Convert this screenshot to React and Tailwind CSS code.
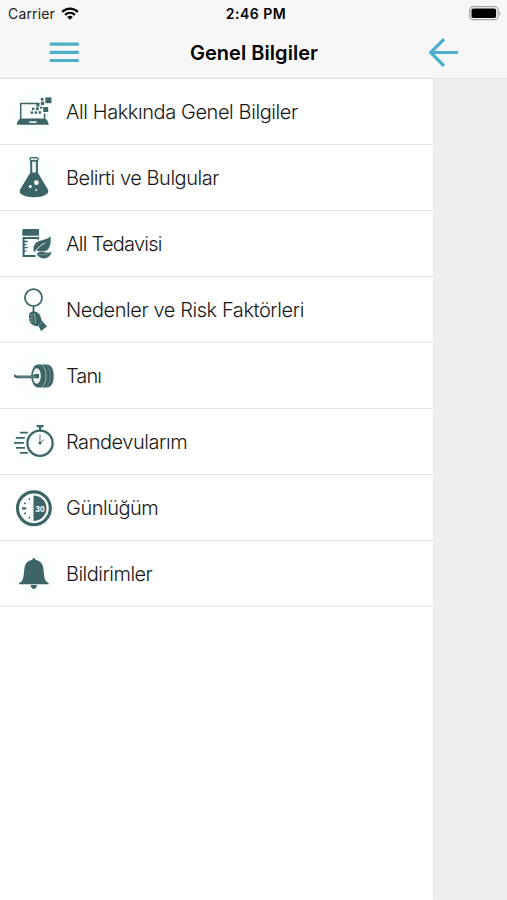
import React from "react";

const INK = "#3d6466";

function Laptop() {
  return (
    <>
      <path d="M39.5 24.4H20.7V40.2H44.600V34.500" fill="none" stroke={INK} strokeWidth="1.500" />
      <path d="M19 40.300h27.500l2 3.600v1.800H17v-1.800z" fill={INK} />
      <path d="M28.500 42.200h9l-1.500 1.900h-6z" fill="#dfeceb" />
      <g fill={INK}>
        <rect x="45.400" y="18.400" width="6" height="5.800" />
        <rect x="43.200" y="28" width="5" height="5" />
        <rect x="40.800" y="19" width="2.700" height="2.600" />
        <rect x="40.800" y="22.700" width="3.400" height="3.300" />
        <rect x="36.400" y="24.600" width="3" height="3" />
        <rect x="32" y="28.800" width="2.400" height="2.400" />
        <rect x="36" y="28.400" width="2.800" height="2.800" />
        <rect x="40.200" y="27.600" width="2.200" height="2.200" />
        <rect x="30.600" y="32.400" width="2.400" height="2.400" />
        <rect x="34.600" y="32.400" width="2.400" height="2.400" />
        <rect x="38.600" y="32.200" width="2.400" height="2.400" />
      </g>
    </>
  );
}

function Flask() {
  return (
    <>
      <path d="M30.200 15.500v12.300L20.100 44.500c-2.200 4.600 4.700 7.700 13.900 7.700s16.100-3.100 13.900-7.700L37.900 27.800V15.500z" fill={INK} />
      <path d="M32.200 16.500h3.700v11H32.200z" fill="#f1f8f8" />
      <rect x="29.900" y="12.700" width="8.300" height="3" rx="1.500" fill="#dfeaea" stroke={INK} strokeWidth="1.300" />
      <circle cx="36.400" cy="37.700" r="2.400" fill="#fff" />
      <circle cx="30.300" cy="41.500" r="1.500" fill="#fff" />
      <circle cx="36.200" cy="45" r="1" fill="#dfeceb" />
    </>
  );
}

function Medicine() {
  return (
    <>
      <rect x="22.300" y="18" width="16.700" height="6.700" rx="1" fill={INK} />
      <path d="M38 28.500V27H23.600V44.900H35.500" fill="none" stroke={INK} strokeWidth="2" />
      <path d="M24 30.500h3.700M24 33.600h2.600M24 36.700h3.700M24 39.800h2.600" stroke={INK} strokeWidth="1.300" />
      <path d="M50.600 25.400c.5 7.500-.6 14.200-7.400 15.200-2.800.4-5.100-.2-7-1.300l-2 2c-2-5.400.6-10 5-11.400 4.300-1.200 8-1.700 11.400-4.500z" fill={INK} />
      <path d="M34.300 42.800c2.300-5.500 6.200-8.600 10.700-11" fill="none" stroke="#e4efee" strokeWidth="1" />
      <path d="M36.300 43c2.500-3.200 6.400-2.900 8.400-2.100 2.300.8 4.400 1 7.200-.3-.8 3.900-3.700 7-7.900 7.100-3.300.1-5.400-1.700-7.700-4.700z" fill={INK} stroke="#f8fdfc" strokeWidth=".5" />
      <path d="M38.500 43.300c3 .8 5.800.8 9-.2" fill="none" stroke="#9db7b7" strokeWidth=".6" />
    </>
  );
}

function Magnifier() {
  return (
    <>
      <circle cx="33.500" cy="20.700" r="8.500" fill="none" stroke={INK} strokeWidth="1.800" />
      <path d="M33.500 29.500v6" stroke={INK} strokeWidth="1.800" />
      <path d="M29.600 36.300c1-1.300 2.700-2 4.300-1.700 2.600.1 5 1.500 6.200 3.600.7 1.800.9 3.700 1.700 5.400l5.200 5.900-6 4.500-2.500-5c-2.500.5-4.800-.2-6.800-1.700-1.900-1.600-2.400-3.100-2.400-5.300-.5-2-.4-4 .3-5.700z" fill={INK} />
      <path d="M34.600 36.500c-.6 3.500 1.800 5.500.6 10M30.200 38.200h2.700M29.900 41.300h2.900M30.500 44.200h2.500" fill="none" stroke="#b9cccc" strokeWidth=".7" />
      <path d="M38 49l4.500-4" stroke="#8ba9a9" strokeWidth=".6" />
    </>
  );
}

function Wheel() {
  return (
    <>
      <path d="M38.500 21.600H47c4.300 0 6.700 5 6.700 11.400S51.300 44.500 47 44.500h-8.500z" fill={INK} />
      <ellipse cx="38" cy="33" rx="6.800" ry="11.400" fill={INK} />
      <ellipse cx="36.800" cy="33" rx="4" ry="7.800" fill="#eff7f6" />
      <path d="M41.500 22c3.300 2 4.600 6.200 4.600 11s-1.300 9-4.600 11" fill="none" stroke="#b6caca" strokeWidth=".8" />
      <path d="M46.800 22.400c2.400 2.500 3.500 6.500 3.500 10.600s-1.100 8-3.500 10.500" fill="none" stroke="#7f9f9f" strokeWidth=".6" />
      <path d="M14 31.300l2.500 1.300H33l1.500-1.600h4.500v4.300H17.500L14 34z" fill={INK} />
      <path d="M18 33.900h18" stroke="#8dabab" strokeWidth=".6" />
    </>
  );
}

function Stopwatch() {
  return (
    <>
      <circle cx="40" cy="34.200" r="12.600" fill="none" stroke={INK} strokeWidth="2.300" />
      <path d="M36.700 17.100h6.800M40.100 17v4.500" stroke={INK} strokeWidth="2.300" />
      <path d="M20 23.600h7.800M15.800 28.900h9M14 33.900h9.800M16 38.900h9M20 43.800h7.800" stroke={INK} strokeWidth="1.800" />
      <path d="M40 25.500v8.700l4-3.500" fill="none" stroke={INK} strokeWidth=".9" />
      <circle cx="40" cy="34.200" r="1.400" fill={INK} />
    </>
  );
}

function Dial() {
  return (
    <>
      <circle cx="33.900" cy="33.300" r="16.400" fill="#fbffff" stroke={INK} strokeWidth="3.100" />
      <path d="M33.500 20.500a13 12.800 0 0 1 0 25.600z" fill={INK} />
      <path d="M28.800 23.200l1 1.900M24 27.900l1.900 1M24 38.900l1.900-1M28.800 43.500l1-1.900" stroke={INK} strokeWidth="1.300" />
      <path d="M22 33.400h4.200" stroke={INK} strokeWidth="2.200" />
      <text x="40" y="36.500" textAnchor="middle" fill="#fff" className="font-['Liberation_Sans',sans-serif] text-[8.500px] font-bold">30</text>
    </>
  );
}

function Bell() {
  return (
    <>
      <path d="M32.400 18.700a1.500 1.800 0 0 1 3 0c4.500.9 7.300 3.700 7.900 8.200.8 5.300.7 10.400 2.600 13l2.800 2.400v1H19v-1l2.900-2.400c1.900-2.600 1.800-7.700 2.600-13 .6-4.500 3.400-7.300 7.900-8.200z" fill={INK} />
      <path d="M30.700 44h6.200c0 2.300-1.200 4-3.100 4s-3.100-1.700-3.100-4z" fill={INK} />
    </>
  );
}

const items = [
  { label: "All Hakkında Genel Bilgiler", icon: Laptop, tracking: "tracking-[-0.42px]" },
  { label: "Belirti ve Bulgular", icon: Flask, tracking: "tracking-[-0.46px]" },
  { label: "All Tedavisi", icon: Medicine, tracking: "tracking-[-0.74px]" },
  { label: "Nedenler ve Risk Faktörleri", icon: Magnifier, tracking: "tracking-[-0.42px]" },
  { label: "Tanı", icon: Wheel, tracking: "tracking-[-0.9px]" },
  { label: "Randevularım", icon: Stopwatch, tracking: "tracking-[-0.45px]" },
  { label: "Günlüğüm", icon: Dial, tracking: "tracking-[-0.48px]" },
  { label: "Bildirimler", icon: Bell, tracking: "tracking-[-0.52px]" },
];

function MenuRow({ label, icon: Icon, tracking }) {
  return (
    <li className="flex h-[66px] items-center border-b border-[#e5e5e5]">
      <svg className="h-[65px] w-[66px] shrink-0" viewBox="0 0 66 65" aria-hidden="true">
        <circle cx="34" cy="33" r="21" fill="#fafefd" />
        <Icon />
      </svg>
      <span
        className={`whitespace-nowrap pt-px font-['Inter','Liberation_Sans',sans-serif] text-[20px] font-light leading-6 text-[#171717] ${tracking}`}
      >
        {label}
      </span>
    </li>
  );
}

export default function App() {
  return (
    <div className="flex h-[900px] w-[507px] flex-col overflow-hidden bg-[#eeeeee] font-['Inter','Liberation_Sans',sans-serif]">
      <header className="h-[79px] shrink-0 border-b border-[#e2e2e2] bg-[#f7f7f7]">
        <div className="grid h-[27px] grid-cols-3 items-center pl-[8px] pr-[6px] text-[14px] leading-none text-[#222]">
          <div className="flex items-center gap-[6px]">
            <span className="tracking-[0.15px]">Carrier</span>
            <svg className="h-[13px] w-[18px]" viewBox="0 0 18 13" fill="none" stroke="#000" strokeWidth="2.200">
              <path d="M1.200 4.900c4.500-4.300 11.100-4.300 15.600 0M4.100 7.900c2.900-2.600 6.900-2.600 9.800 0" />
              <path d="M6.200 9.900c1.700-1.400 3.900-1.400 5.600 0L9 12.700z" fill="#000" stroke="none" />
            </svg>
          </div>
          <span className="pl-[3px] text-center font-semibold tracking-[0.500px] text-black">2:46 PM</span>
          <svg className="h-[15px] w-[32px] justify-self-end" viewBox="0 0 32 15">
            <rect x="0.700" y="0.700" width="28.600" height="13" rx="3.800" fill="#f7f7f7" stroke="#a3a3a3" strokeWidth="1.200" />
            <rect x="2.500" y="2.400" width="24.600" height="9.600" rx="1.800" fill="#000" />
            <path d="M30.500 5.500c1.300.6 1.300 3.200 0 3.800z" fill="#999" />
          </svg>
        </div>
        <div className="flex h-[51px] items-center justify-between pl-[49px] pr-[48px]">
          <svg className="h-[22px] w-[31px]" viewBox="0 0 31 22" stroke="#4daec9" strokeWidth="3.200">
            <path d="M.8 2.200h29M.8 10.300h29M.8 18.500h29" />
          </svg>
          <h1 className="text-[20px] font-semibold leading-none tracking-[0.050px] text-black">Genel Bilgiler</h1>
          <svg className="h-[30px] w-[31px]" viewBox="0 0 31 30" fill="none" stroke="#4daec9" strokeWidth="3.200">
            <path d="M16 1.200L2.700 14.500l13.300 13.300M2.700 14.500h27.200" />
          </svg>
        </div>
      </header>
      <nav className="w-[433px] grow bg-white shadow-[0_0_2px_rgba(0,0,0,0.08)]">
        <ul>
          {items.map((item) => (
            <MenuRow key={item.label} {...item} />
          ))}
        </ul>
      </nav>
    </div>
  );
}
